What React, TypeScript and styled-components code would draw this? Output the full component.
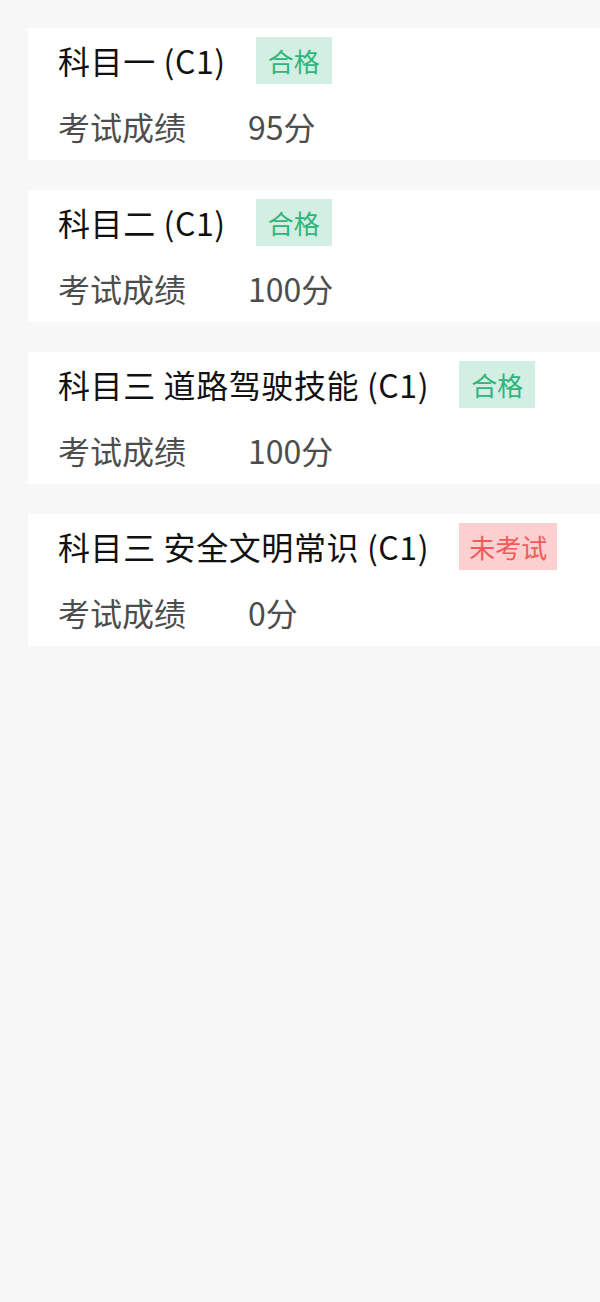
import React from "react";
import styled, { createGlobalStyle } from "styled-components";

const GlobalStyle = createGlobalStyle`
  html, body {
    margin: 0;
    padding: 0;
    background: #f7f7f7;
    font-family: "Noto Sans CJK SC", "Noto Sans", sans-serif;
  }
`;

const Page = styled.div`
  min-height: 1302px;
  background: #f7f7f7;
  padding: 28px 0 0 28px;
  box-sizing: border-box;
  display: flex;
  flex-direction: column;
  gap: 30px;
  overflow: hidden;
`;

const Card = styled.div`
  background: #ffffff;
  height: 132px;
  box-sizing: border-box;
  padding: 7px 0 0 30px;
  display: flex;
  flex-direction: column;
`;

const TitleRow = styled.div`
  display: flex;
  align-items: center;
  height: 50px;
  gap: 30px;
`;

const Title = styled.div`
  font-size: 32px;
  letter-spacing: 0.6px;
  color: #111111;
  white-space: nowrap;
`;

const Badge = styled.span<{ $fail?: boolean }>`
  display: inline-flex;
  align-items: center;
  justify-content: center;
  height: 47px;
  padding: 0 ${(p) => (p.$fail ? "10px" : "12px")};
  font-size: 26px;
  background: ${(p) => (p.$fail ? "#fdd0d0" : "#d3eee2")};
  color: ${(p) => (p.$fail ? "#ef5a5a" : "#2fb57b")};
`;

const ScoreRow = styled.div`
  display: flex;
  align-items: center;
  height: 50px;
  margin-top: 16px;
  font-size: 32px;
  color: #4d4d4d;
`;

const Label = styled.span`
  width: 190px;
`;

const Value = styled.span``;

const items = [
  { title: "科目一 (C1)", pass: true, score: 95 },
  { title: "科目二 (C1)", pass: true, score: 100 },
  { title: "科目三 道路驾驶技能 (C1)", pass: true, score: 100 },
  { title: "科目三 安全文明常识 (C1)", pass: false, score: 0 },
];

export default function App() {
  return (
    <>
      <GlobalStyle />
      <Page>
        {items.map((it) => (
          <Card key={it.title}>
            <TitleRow>
              <Title>{it.title}</Title>
              <Badge $fail={!it.pass}>{it.pass ? "合格" : "未考试"}</Badge>
            </TitleRow>
            <ScoreRow>
              <Label>考试成绩</Label>
              <Value>{it.score}分</Value>
            </ScoreRow>
          </Card>
        ))}
      </Page>
    </>
  );
}
